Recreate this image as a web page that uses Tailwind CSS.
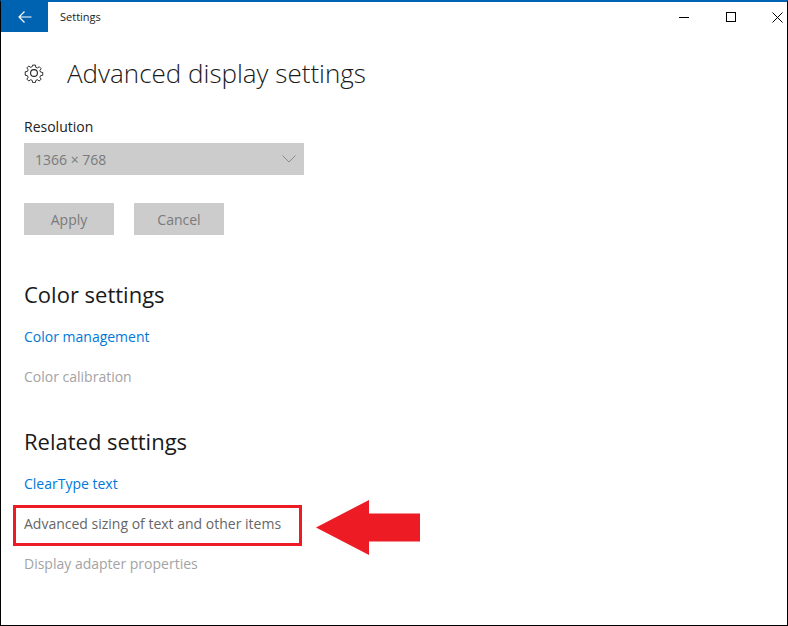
<!DOCTYPE html>
<html><head><meta charset="utf-8"><script src="https://cdn.jsdelivr.net/npm/@tailwindcss/browser@4"></script></head>
<body class="bg-white">
<div class="relative w-[788px] h-[626px] overflow-hidden bg-white border-x border-b border-black border-t-2 border-t-[#0063b1] font-['Open_Sans',sans-serif] text-[#1a1a1a]">
  <header class="flex items-center h-[30px]">
    <div class="w-[47px] h-[30px] bg-[#0063b1] flex items-center justify-center">
      <svg width="14" height="12" viewBox="0 0 14 12" fill="none" stroke="#fff" stroke-width="1.2"><path d="M6.5 0.5 L1 6 L6.5 11.5 M1 6 H13.5"/></svg>
    </div>
    <span class="ml-[12px] text-[11px] text-[#222]">Settings</span>
    <div class="ml-auto flex items-center">
      <svg class="mr-[36px]" width="11" height="11" viewBox="0 0 11 11" stroke="#000" fill="none"><path d="M0 5.5H10"/></svg>
      <svg class="mr-[35px]" width="11" height="11" viewBox="0 0 11 11" stroke="#000" fill="none"><rect x="0.5" y="0.5" width="9" height="9"/></svg>
      <svg class="mr-[4px]" width="11" height="11" viewBox="0 0 11 11" stroke="#000" fill="none"><path d="M0.5 0.5L10.5 10.5M10.5 0.5L0.5 10.5"/></svg>
    </div>
  </header>
  <main class="pl-[23px]">
    <div class="flex items-center mt-[20px] h-[42px]">
      <svg width="20" height="20" viewBox="0 0 20 20" fill="none" stroke="#222" stroke-width="1.1"><path d="M8.4 0.8h3.2l.5 2.6 1.8.8 2.2-1.5 2.2 2.2-1.5 2.2.8 1.8 2.6.5v3.2l-2.6.5-.8 1.8 1.5 2.2-2.2 2.2-2.2-1.5-1.8.8-.5 2.6H8.4l-.5-2.6-1.8-.8-2.2 1.5-2.2-2.2 1.5-2.2-.8-1.8-2.6-.5V8.6l2.6-.5.8-1.8L1.7 4.1l2.2-2.2 2.2 1.5 1.8-.8z" transform="translate(1.4 1.4) scale(.86)"/><circle cx="10" cy="10" r="3.4"/></svg>
      <h1 class="ml-[23px] text-[26px] font-light leading-none text-[#1a1a1a]">Advanced display settings</h1>
    </div>
    <p class="mt-[23px] text-[14px] leading-[20px] text-[#222]">Resolution</p>
    <div class="mt-[6px] w-[280px] h-[32px] bg-[#cccccc] flex items-center justify-between pl-[11px] pr-[8px]">
      <span class="text-[14px] text-[#7a7a7a]">1366 × 768</span>
      <svg width="14" height="8" viewBox="0 0 14 8" fill="none" stroke="#8a8a8a"><path d="M0.5 0.5L7 7L13.5 0.5"/></svg>
    </div>
    <div class="mt-[28px] flex gap-[20px]">
      <div class="w-[90px] h-[32px] bg-[#cccccc] flex items-center justify-center text-[14px] text-[#7a7a7a]">Apply</div>
      <div class="w-[90px] h-[32px] bg-[#cccccc] flex items-center justify-center text-[14px] text-[#7a7a7a]">Cancel</div>
    </div>
    <h2 class="mt-[42px] text-[22px] leading-[34px] text-[#1a1a1a]">Color settings</h2>
    <p class="mt-[16px] text-[14px] leading-[20px] text-[#0078d7]">Color management</p>
    <p class="mt-[20px] text-[14px] leading-[20px] text-[#a3a3a3]">Color calibration</p>
    <h2 class="mt-[37px] text-[22px] leading-[34px] text-[#1a1a1a]">Related settings</h2>
    <p class="mt-[16px] text-[14px] leading-[20px] text-[#0078d7]">ClearType text</p>
    <p class="mt-[20px] text-[14px] leading-[20px] text-[#666]">Advanced sizing of text and other items</p>
    <p class="mt-[20px] text-[14px] leading-[20px] text-[#a3a3a3]">Display adapter properties</p>
  </main>
  <div class="absolute left-[12px] top-[503px] w-[289px] h-[41px] border-[3px] border-[#ed1c24]"></div>
  <svg class="absolute left-[314px] top-[498px]" width="106" height="56" viewBox="0 0 106 56"><path d="M1 27.5L54 0V13.5H105V41.5H54V55Z" fill="#ed1c24"/></svg>
</div>
</body></html>
